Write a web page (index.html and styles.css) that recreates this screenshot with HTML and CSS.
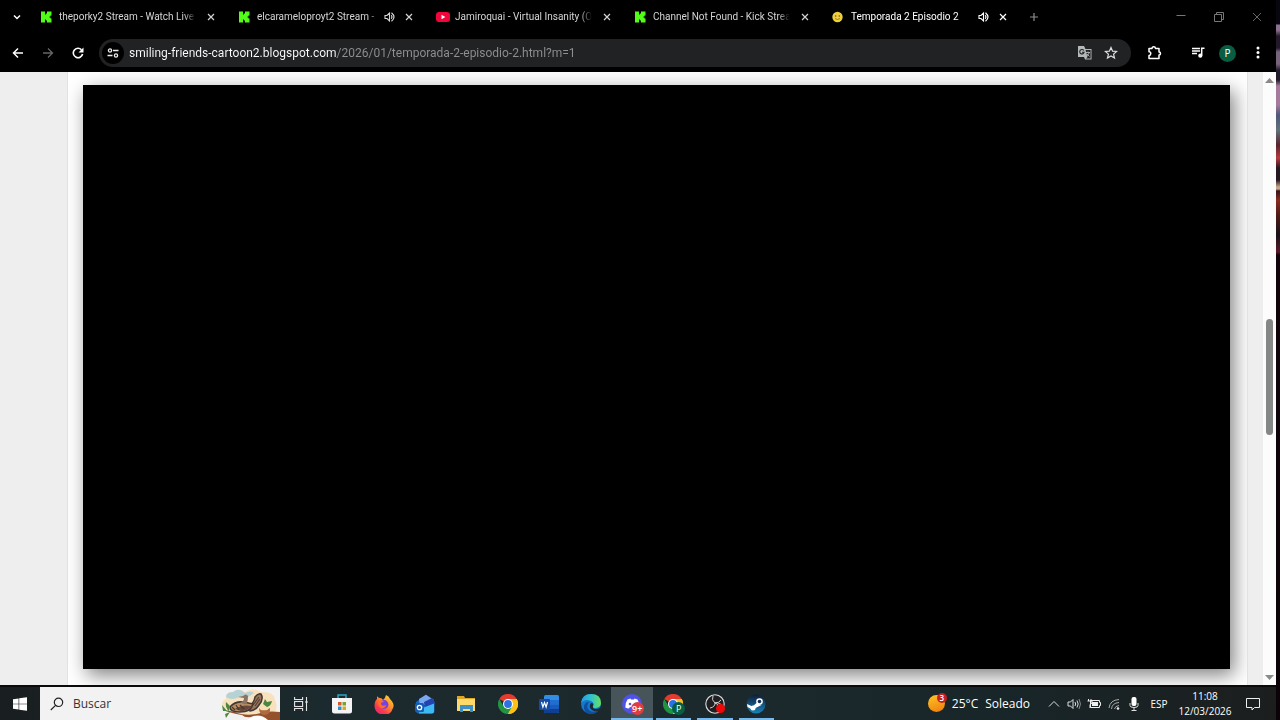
FILE: index.html
```html
<!DOCTYPE html>
<html lang="es">
<head>
<meta charset="utf-8">
<title>Temporada 2 Episodio 2</title>
<link rel="stylesheet" href="styles.css">
</head>
<body>
<svg class="defs" aria-hidden="true">
  <symbol id="kick" viewBox="0 0 12 12"><path fill="#53fc18" d="M1 0.500h4v3h1v-1h1v-2h4.500v4h-1v1h-1v1h1v1h1v4H7v-2H6v-1H5v3H1z"/></symbol>
  <symbol id="close" viewBox="0 0 10 10"><path d="M2 2l6 6M8 2L2 8" fill="none" stroke="currentColor" stroke-width="1.200"/></symbol>
  <symbol id="sound" viewBox="0 0 12 12"><path d="M1 4.500h2L5.500 2v8L3 7.500H1z" fill="none" stroke="currentColor" stroke-width="1.100"/><path d="M7.300 4.200q1.400 1.800 0 3.600M7.500 1.700q5 4.300 0 8.600" fill="none" stroke="currentColor" stroke-width="1.200"/></symbol>
  <symbol id="chrome" viewBox="0 0 20 20"><path fill="#e33b2e" d="M10 10L1.300 5A10 10 0 0 1 18.700 5z"/><path fill="#fbc116" d="M10 10V5h8.700A10 10 0 0 1 10 20z"/><path fill="#229342" d="M10 20A10 10 0 0 1 1.300 5L5.700 12.500 14.300 12.500z"/><path fill="#fbc116" d="M14.300 12.500L10 20a10 10 0 0 0 8.700-15H10z"/><circle cx="10" cy="10" r="5" fill="#fff"/><circle cx="10" cy="10" r="3.900" fill="#2a72e5"/></symbol>
</svg>
<div class="screen">
  <main class="browser">
    <header>
      <nav class="tabstrip" aria-label="Pestañas">
        <button class="tab-search" aria-label="Buscar pestañas"><svg width="10" height="10" viewBox="0 0 10 10"><path d="M2 3.500l3 3 3-3" fill="none" stroke="#fff" stroke-width="1.500"/></svg></button>
        <div class="tab"><svg class="favicon"><use href="#kick"/></svg><span class="title">theporky2 Stream - Watch Live</span><button class="close" aria-label="Cerrar"><svg><use href="#close"/></svg></button></div>
        <div class="tab"><svg class="favicon"><use href="#kick"/></svg><span class="title">elcarameloproyt2 Stream - </span><svg class="sound"><use href="#sound"/></svg><button class="close" aria-label="Cerrar"><svg><use href="#close"/></svg></button></div>
        <div class="tab"><svg class="favicon wide" viewBox="0 0 14 12"><rect y="1" width="14" height="10" rx="3" fill="#f0063a"/><path d="M5.500 3.800v4.400L9.300 6z" fill="#fff"/></svg><span class="title">Jamiroquai - Virtual Insanity (O</span><button class="close" aria-label="Cerrar"><svg><use href="#close"/></svg></button></div>
        <div class="tab"><svg class="favicon"><use href="#kick"/></svg><span class="title">Channel Not Found - Kick Strea</span><button class="close" aria-label="Cerrar"><svg><use href="#close"/></svg></button></div>
        <div class="tab active"><svg class="favicon" viewBox="0 0 12 12"><circle cx="5.500" cy="6" r="5.200" fill="#efcf3c"/><circle cx="3.700" cy="5" r=".8" fill="#6b5312"/><circle cx="7.300" cy="5" r=".8" fill="#6b5312"/><path d="M3 7.500q2.500 2 5 0" fill="none" stroke="#8a6b18" stroke-width=".8"/></svg><span class="title">Temporada 2 Episodio 2</span><svg class="sound"><use href="#sound"/></svg><button class="close" aria-label="Cerrar"><svg><use href="#close"/></svg></button></div>
        <button class="new-tab" aria-label="Nueva pestaña"><svg width="10" height="10" viewBox="0 0 10 10"><path d="M5 1v8M1 5h8" stroke="#8c8c8c" stroke-width="1.200"/></svg></button>
        <div class="window-controls">
          <button aria-label="Minimizar"><svg width="10" height="10" viewBox="0 0 10 10"><path d="M.5 3.500h9" stroke="#777"/></svg></button>
          <button aria-label="Restaurar"><svg width="10" height="10" viewBox="0 0 10 10"><path d="M.5 2.500h7v7h-7zM2.500 2.500v-2h7v7h-2" fill="none" stroke="#777"/></svg></button>
          <button aria-label="Cerrar ventana"><svg width="10" height="10" viewBox="0 0 10 10"><path d="M1 1l8 8M9 1L1 9" stroke="#666"/></svg></button>
        </div>
      </nav>
      <div class="toolbar">
        <button aria-label="Atrás"><svg width="12" height="12" viewBox="0 0 12 12"><path d="M11 6H2M6 1.500L1.500 6 6 10.500" fill="none" stroke="#fff" stroke-width="1.500"/></svg></button>
        <button aria-label="Adelante"><svg width="12" height="12" viewBox="0 0 12 12"><path d="M1 6h9M6 1.500L10.500 6 6 10.500" fill="none" stroke="#666" stroke-width="1.300"/></svg></button>
        <button aria-label="Recargar"><svg width="12" height="12" viewBox="0 0 12 12"><path d="M10.600 7A4.700 4.700 0 1 1 9.500 2.800" fill="none" stroke="#fff" stroke-width="1.600"/><path d="M11.500.5v5H6.500z" fill="#fff"/></svg></button>
        <form class="omnibox">
          <button type="button" class="site-info" aria-label="Información del sitio"><svg width="12" height="12" viewBox="0 0 12 12"><g fill="none" stroke="#eee" stroke-width="1.300"><circle cx="3" cy="3.500" r="1.600"/><path d="M6 3.500h5.500M.5 8.500h5"/><circle cx="9" cy="8.500" r="1.600"/></g></svg></button>
          <input class="url" type="text" aria-label="Dirección" value="smiling-friends-cartoon2.blogspot.com/2026/01/temporada-2-episodio-2.html?m=1">
          <button type="button" aria-label="Traducir"><svg width="14" height="14" viewBox="0 0 14 14"><path d="M0 0h6l1.500 3H13.500v10.500H7L6 11H0z" fill="#b5b8b9"/><path d="M7.600 4h5v8.500H8L9.500 11z" fill="#222527"/><path d="M5.800 4.500a2.200 2.200 0 1 0 .3 1.700H4" fill="none" stroke="#222527" stroke-width="1.100"/><path d="M8 6.500h4M10 5.500v1M11.300 6.500Q10.500 9 8.500 10M9 8l2.500 2.500" fill="none" stroke="#b5b8b9" stroke-width=".9"/></svg></button>
          <button type="button" aria-label="Añadir a marcadores"><svg width="14" height="14" viewBox="0 0 14 14"><path d="M7 1.500l1.600 3.700 4 .3-3 2.600.9 3.900L7 9.900 3.500 12l.9-3.900-3-2.600 4-.3z" fill="none" stroke="#dedede" stroke-width="1.200"/></svg></button>
        </form>
        <div class="actions">
          <button aria-label="Extensiones"><svg width="16" height="16" viewBox="0 0 16 16"><path d="M3 3.500h3Q6 1.800 7.700 1.800T9.500 3.500H13V7q1.500 0 1.500 1.500T13 10V13.500H3v-3q1.800-.2 1.800-2T3 6.800z" fill="none" stroke="#fff" stroke-width="1.500" stroke-linejoin="round"/></svg></button>
          <button class="media" aria-label="Control multimedia"><svg width="14" height="14" viewBox="0 0 14 14"><path d="M1 2.500h8M1 5h8M1 7.500h5" stroke="#fff" stroke-width="1.400"/><path d="M10.700 9.500V2.300H13.500" fill="none" stroke="#fff" stroke-width="1.500"/><circle cx="9.300" cy="9.700" r="2.100" fill="#fff"/></svg></button>
          <button class="avatar" aria-label="Perfil">P</button>
          <button class="more" aria-label="Menú"><svg width="4" height="14" viewBox="0 0 4 14"><g fill="#fff"><circle cx="2" cy="2" r="1.500"/><circle cx="2" cy="6.500" r="1.500"/><circle cx="2" cy="11" r="1.500"/></g></svg></button>
        </div>
      </div>
    </header>
    <section class="viewport">
      <div class="page"><article class="post"><div class="player" role="region" aria-label="Reproductor de vídeo"></div></article></div>
      <div class="scrollbar">
        <svg width="9" height="5" viewBox="0 0 9 5"><path d="M0 5h9L4.500 0z" fill="#8a8a8a"/></svg>
        <div class="track"><div class="thumb"></div></div>
        <svg width="9" height="5" viewBox="0 0 9 5"><path d="M0 0h9L4.500 5z" fill="#8a8a8a"/></svg>
      </div>
    </section>
  </main>
  <footer class="taskbar">
    <button class="start" aria-label="Inicio"><svg width="14" height="14" viewBox="0 0 14 14"><path fill="#fff" d="M0 2.200L5.600 1.400V6.700H0zM6.200 1.300L14 .2V6.700H6.200zM0 7.300H5.600V12.600L0 11.800zM6.200 7.300H14v6.500L6.200 12.700z"/></svg></button>
    <label class="search">
      <svg width="14" height="14" viewBox="0 0 14 14"><circle cx="8.500" cy="5.300" r="4.200" fill="none" stroke="#222" stroke-width="1.200"/><path d="M5.500 8.300L.8 13" stroke="#222" stroke-width="1.200"/></svg>
      <input type="text" placeholder="Buscar" aria-label="Buscar">
      <svg class="doodle" width="60" height="32" viewBox="0 0 60 32"><path d="M4 20Q-1 14 6 11 5 5 13 5 19 0 25 4q8-5 16 0 13-1 14 8 4 8-2 15L22 27z" fill="#f8e2bd"/><path d="M6 9Q6 4 13 4q6-5 12 1 6-3 9 0-8 7-15 4-7 4-13 0z" fill="#b7d2d5"/><path d="M3 22q10 1 14 3 12 4 27-1 8-1 16 0v8H48q-8-7-17-3-6 1-9-2Q10 25 3 22z" fill="#94512d"/><path d="M27 32q10-8 20 0z" fill="#fff"/><path d="M29 18q5-3 6-9 3-4 6-3 3 5-2 11-3 5-9 6z" fill="#9b765a" stroke="#423734" stroke-width="1.500"/><path d="M33 17l6-8M35 18l5-7" stroke="#554139" stroke-width="1.200"/><path d="M10 19q5-6 14-5l9 2q-2 8-13 8-10 0-10-5z" fill="#b88b62" stroke="#423734" stroke-width="1.600"/><path d="M15 21q7-5 17-3-5 5-11 5" fill="#65483b"/><path d="M12 19l3 3M16 17l3 5M20 17l4 4" stroke="#423734" stroke-width="1.200"/><path d="M20 14q4 0 4-4l-6-1 5-1q3-3 5 0 0 4-1 7-2 3-7-1z" fill="#8b7466"/><path d="M39 20q5 4 11 0 1 7-6 7-5-1-5-7z" fill="#ae6a3d"/><ellipse cx="44" cy="20" rx="4.500" ry="2.300" fill="#f7deb9"/><g fill="#4b873e"><path d="M6 14l4 4-1 5q-4-3-3-9zM2 17l5 6H3zM10 24l-4 6-1-4zM43 16l2-5 2 3 5-1q-1 5-5 6z"/></g></svg>
    </label>
    <div class="apps">
      <button aria-label="Vista de tareas"><svg width="14" height="14" viewBox="0 0 14 14"><g fill="none" stroke="#e5e5e5" stroke-width="1.100"><path d="M.6 0v2.500h8V0M.6 14v-2.500h8V14"/><rect x=".6" y="4.500" width="8" height="5"/><path d="M12.500 0v14M11 5h3"/></g></svg></button>
      <button aria-label="Microsoft Store"><svg width="20" height="20" viewBox="0 0 20 20"><path d="M6 4V1h8v3" fill="none" stroke="#2aa7c4" stroke-width="1.500"/><path d="M0 4h20v13q0 2.500-2.500 2.500h-15Q0 19.500 0 17z" fill="#f4f4f4"/><path fill="#d5562f" d="M6 8h3.500v3.500H6z"/><path fill="#75a52b" d="M10.500 8H14v3.500h-3.500z"/><path fill="#2e8fca" d="M6 12.500h3.500V16H6z"/><path fill="#dda922" d="M10.500 12.500H14V16h-3.500z"/></svg></button>
      <button aria-label="Firefox"><svg width="20" height="20" viewBox="0 0 20 20"><defs><linearGradient id="ff" x1="1" y1="0" x2="0.200" y2="1"><stop stop-color="#ffe243"/><stop offset=".4" stop-color="#ff9a27"/><stop offset=".75" stop-color="#fa3b4b"/><stop offset="1" stop-color="#df2876"/></linearGradient></defs><path d="M3 2q1 2 3 2 2 0 3 2 2-1 3-5 3 1 4 4 5 5 3 9-2 7-9 7Q1 20 .5 12 .5 7 3 5z" fill="url(#ff)"/><circle cx="10" cy="10.500" r="4.400" fill="#7543df"/><path d="M4 7q5-2 6 1-3 0-3 2 1 3 5 1-1 4-5 3-4-2-3-7z" fill="#ff6b2e"/></svg></button>
      <button aria-label="Outlook"><svg width="20" height="20" viewBox="0 0 20 20"><path d="M1 8L11 .8 19.500 8v9q0 2.500-2.500 2.500H4q-3 0-3-3z" fill="#1668c7"/><path d="M4 5l7-4.200L19 6 5 13z" fill="#79a8f1"/><path d="M9 8l8-4 2.500 4v3L10 15z" fill="#2443ae"/><path d="M5 15l14-5.500V17q0 2.500-2.500 2.500H4z" fill="#3cbaf1"/><rect y="9" width="9" height="9" rx="1.500" fill="#155cb5"/><circle cx="4.500" cy="13.500" r="2.200" fill="none" stroke="#fff" stroke-width="1.300"/></svg></button>
      <button aria-label="Explorador de archivos"><svg width="20" height="18" viewBox="0 0 20 18"><path d="M1 1h7l1 2h10v4H1z" fill="#e0a623"/><path d="M1 4h18v12H1z" fill="#ffd96a"/><path d="M4 10h13v7h-3v-3H7v3H4z" fill="#3c91c2"/></svg></button>
      <button aria-label="Google Chrome"><svg width="20" height="20"><use href="#chrome"/></svg></button>
      <button aria-label="Word"><svg width="20" height="20" viewBox="0 0 20 20"><rect x="5" y="1" width="15" height="18" rx="1.500" fill="#318de6"/><path d="M5 6h15v4.500H5z" fill="#216ecf"/><path d="M5 10.500h15V15H5z" fill="#185abd"/><path d="M5 15h15v3q0 1-1.500 1H6q-1 0-1-1z" fill="#103f91"/><rect y="5" width="11" height="11" rx="1" fill="#164ba3"/><path d="M2.500 8l1.400 5L5.500 8.500 7.100 13 8.500 8" fill="none" stroke="#fff" stroke-width="1.200"/></svg></button>
      <button aria-label="Microsoft Edge"><svg width="20" height="20" viewBox="0 0 20 20"><defs><linearGradient id="eg"><stop stop-color="#279be0"/><stop offset=".5" stop-color="#31c3cf"/><stop offset="1" stop-color="#67e25a"/></linearGradient></defs><circle cx="10" cy="10" r="10" fill="#1479ce"/><path d="M0 9Q1 0 10 0q10 0 10 9 0 4-5 5-4 0-3-2 2-3-2-5Q4 4 0 9z" fill="url(#eg)"/><path d="M8 8q-4 5 1 9 4 2 9-1-3 4-8 4-8-1-7-8 1-4 5-4z" fill="#124d9e"/><path d="M12 12q-1 3 3 3 3 0 5-2v3l-2 1q-4 1-7-1-4-3-1-7 3 0 2 3z" fill="#1c2b30"/></svg></button>
      <button class="running current" aria-label="Discord"><svg width="20" height="20" viewBox="0 0 20 20"><circle cx="10" cy="10" r="10" fill="#4e53e5"/><path d="M5.500 5.500l3-1 .5 1h3l.5-1 3 1q2 3 2 8-2 1-3.500 1l-1-1.500q-2 .5-5 0L7 14.500q-2 0-3.700-1 0-5 2.200-8z" fill="#fff"/><circle cx="8" cy="10" r="1.300" fill="#4e53e5"/></svg><span class="count">9+</span></button>
      <button class="running" aria-label="Google Chrome, perfil P"><svg width="20" height="20"><use href="#chrome"/></svg><span class="profile">P</span></button>
      <button class="running" aria-label="OBS Studio"><svg width="20" height="20" viewBox="0 0 20 20"><circle cx="10" cy="10" r="9.200" fill="#201f22" stroke="#ddd" stroke-width="1.100"/><path d="M8 2q-2 4 2 7 4 0 6-3M10 9q0 4-5 5M10 9q4 1 3 6M17 12q-2-4-7-3" fill="none" stroke="#cfcfcf"/><circle cx="15.500" cy="14.500" r="4.500" fill="#f00808"/></svg></button>
      <button class="running" aria-label="Steam"><svg width="20" height="20" viewBox="0 0 20 20"><defs><linearGradient id="st" x2="0" y2="1"><stop stop-color="#101b3a"/><stop offset="1" stop-color="#1784ba"/></linearGradient></defs><circle cx="10" cy="10" r="9.500" fill="url(#st)"/><path d="M1 10l5.500 2.500L10.500 9l5 2-5 2.500L7 16 1.500 13z" fill="#fff"/><circle cx="13.500" cy="7.500" r="3.300" fill="#fff"/><circle cx="13.500" cy="7.500" r="1.800" fill="#172b51"/><circle cx="7" cy="14" r="2.500" fill="#fff"/></svg></button>
    </div>
    <div class="tray">
      <button class="weather"><span class="sun"><span class="alert">3</span></span><span>25°C</span><span>Soleado</span></button>
      <div class="status">
        <button aria-label="Iconos ocultos"><svg width="12" height="14" viewBox="0 0 12 14"><path d="M1 9.500l5-5 5 5" fill="none" stroke="#ddd"/></svg></button>
        <button aria-label="Volumen"><svg width="14" height="14" viewBox="0 0 14 14"><path d="M1 5h2.500L6 2.500v9L3.500 9H1zM8 5q1.300 2 0 4M10 3.500q2.300 3.500 0 7" fill="none" stroke="#ddd"/><path d="M12 2q3 5 0 10" fill="none" stroke="#888"/></svg></button>
        <button aria-label="Batería"><svg width="14" height="14" viewBox="0 0 14 14"><path d="M3.500 3.500h9v2h1v3h-1v2h-9z" fill="none" stroke="#eee"/><path d="M5 5h6v4H5z" fill="#eee"/><path d="M1.500 2v2M4 2v2M.5 4h4.500v2L3 7.500V11" fill="none" stroke="#eee"/></svg></button>
        <button aria-label="Red"><svg width="12" height="14" viewBox="0 0 12 14"><g fill="none" stroke="#aaa"><path d="M1 11Q2 3 11 2.500M3.500 12Q4 6 11 5.500M6.500 12Q7 9 11 8.500"/></g><circle cx="10" cy="11.500" r="1.300" fill="#eee"/></svg></button>
        <button aria-label="Micrófono"><svg width="10" height="14" viewBox="0 0 10 14"><rect x="2.500" width="5" height="9" rx="2" fill="#fff"/><path d="M1 6v2.500q0 2 4 2t4-2V6M5 10.500V13M2.500 13.500h5" fill="none" stroke="#ddd"/></svg></button>
      </div>
      <button class="language">ESP</button>
      <time class="clock" datetime="2026-03-12T11:08"><span>11:08</span><span>12/03/2026</span></time>
      <button class="notices" aria-label="Notificaciones"><svg width="14" height="14" viewBox="0 0 14 14"><path d="M.5 1.500h13v9H8.500l-2.500 2.500v-2.500H.5z" fill="none" stroke="#eee"/></svg></button>
    </div>
  </footer>
</div>
<aside class="wallpaper" aria-hidden="true"></aside>
</body>
</html>
```
FILE: styles.css
```css
* { box-sizing: border-box; }
body {
  margin: 0;
  min-height: 100vh;
  display: flex;
  background: #000;
  font-family: "Open Sans", "Noto Sans", sans-serif;
  font-size: 11px;
  color: #fff;
}
button {
  display: flex;
  align-items: center;
  justify-content: center;
  padding: 0;
  border: 0;
  background: none;
  color: inherit;
  font: inherit;
}
svg { display: block; flex: none; }
.defs { position: absolute; width: 0; height: 0; }
.screen { flex: 1; min-width: 0; display: flex; flex-direction: column; }
.browser { flex: 1; display: flex; flex-direction: column; }

.tabstrip { display: flex; align-items: center; height: 34px; }
.tab-search { width: 33px; }
.tab {
  flex: 0 1 198px;
  min-width: 0;
  display: flex;
  align-items: center;
  padding: 0 13px 0 7px;
  color: #d4d4d4;
}
.tab.active { color: #fff; }
.favicon { width: 12px; height: 12px; margin-right: 7px; }
.favicon.wide { width: 14px; height: 12px; margin: 0 5px 0 0; }
.title {
  flex: 1;
  overflow: hidden;
  white-space: nowrap;
  font-family: Roboto, "Open Sans", sans-serif;
  font-size: 10px;
  line-height: 16px;
  mask-image: linear-gradient(to right, #000 calc(100% - 12px), transparent);
}
.sound { width: 12px; height: 12px; margin: 0 6px 0 4px; }
.close { width: 14px; height: 14px; }
.title + .close { margin-left: 8px; }
.close svg { width: 10px; height: 10px; }
.new-tab { width: 22px; height: 24px; }
.window-controls { display: flex; margin-left: auto; }
.window-controls button { width: 38px; height: 32px; }

.toolbar { display: flex; align-items: center; height: 38px; padding-right: 6px; }
.toolbar > button { width: 30px; height: 30px; }
.toolbar > button:first-child { width: 33px; padding-left: 3px; }
.omnibox {
  flex: 1;
  display: flex;
  align-items: center;
  gap: 8px;
  height: 28px;
  margin-left: 6px;
  padding: 0 11px 0 3px;
  border-radius: 14px;
  background: #202224;
}
.omnibox button { width: 18px; height: 22px; }
.omnibox .site-info { width: 22px; margin-right: -3px; border-radius: 50%; background: #000; }
.url {
  flex: 1;
  min-width: 0;
  padding: 0;
  border: 0;
  outline: 0;
  font: 12px/20px Roboto, "Open Sans", sans-serif;
  color: transparent;
  background: linear-gradient(to right, #fff 208px, #8e9092 208px) text;
}
.actions { display: flex; align-items: center; margin-left: 11px; }
.actions button { width: 24px; height: 24px; }
.actions .media { margin: 0 9px 0 20px; }
.actions .avatar { width: 17px; height: 17px; border-radius: 50%; background: #075e43; font-size: 10px; }
.actions .more { margin-left: 10px; }

.viewport { flex: 1; display: flex; background: #eee; }
.page { flex: 1; display: flex; padding: 0 15px 0 67px; }
.post {
  flex: 1;
  display: flex;
  padding: 13px 17px 16px 15px;
  border: solid #e2e2e2;
  border-width: 0 1px;
  background: #fff;
  overflow: hidden;
}
.player { flex: 1; background: #000; box-shadow: 4px 6px 18px rgba(0, 0, 0, .5); }
.scrollbar {
  display: flex;
  flex-direction: column;
  align-items: center;
  width: 13px;
  padding: 6px 0 5px;
  background: #fcfcfc;
}
.track { flex: 1; width: 7px; padding-top: 236px; }
.thumb { height: 116px; border-radius: 4px; background: #858786; }

.taskbar {
  display: flex;
  align-items: stretch;
  height: 35px;
  border-top: 2px solid #080a0b;
  background: linear-gradient(to right, #191e20, #1b2a2e 25%, #1b292c 60%, #182629 78%, #1c1e1e);
}
.start { width: 40px; }
.search { flex: 0 1 240px; min-width: 0; display: flex; align-items: center; padding-left: 10px; background: #f2f2f2; }
.search input { flex: 1; width: 0; min-width: 0; padding: 0 0 0 9px; border: 0; outline: 0; background: none; font: 12px/20px "Open Sans", "Noto Sans", sans-serif; }
.search input::placeholder { color: #333; opacity: 1; }
.apps { flex: 0 1 497px; display: grid; grid-template-columns: repeat(12, 1fr); }
.apps button { position: relative; }
.running::after { content: ""; position: absolute; left: 3px; right: 3px; bottom: 0; height: 2px; background: #76b9ed; }
.current { background: #47555a; }
.current::after { left: 0; right: 0; }
.count, .profile {
  position: absolute;
  right: 9px;
  bottom: 5px;
  width: 13px;
  height: 13px;
  border-radius: 50%;
  background: #e33b43;
  font-size: 9px;
  font-weight: 600;
  line-height: 13px;
  text-align: center;
}
.profile { background: #075e43; font-weight: 400; }
.tray { display: flex; align-items: center; margin-left: auto; }
.weather { gap: 7px; margin-right: 14px; font-size: 12px; }
.weather span { white-space: nowrap; }
.sun { position: relative; width: 17px; height: 17px; border-radius: 50%; background: linear-gradient(160deg, #ffc527, #ee7b0c); }
.alert { position: absolute; top: -2px; right: -2px; width: 10px; height: 10px; border-radius: 50%; background: #c4201f; font-size: 8px; font-weight: 600; line-height: 10px; text-align: center; }
.status { display: flex; }
.status button { width: 20px; height: 30px; }
.language { width: 30px; font-size: 10px; }
.clock { display: flex; flex-direction: column; width: 62px; font-size: 10px; line-height: 15px; text-align: center; }
.notices { width: 34px; height: 30px; margin-right: 6px; }

.wallpaper {
  width: 4px;
  background: linear-gradient(#080710 0 24px, #8d7290 25px 30px, #211928 36px 48px, #78637c 52px 64px, #221c2b 70px 80px, #a67a9d 86px 105px, #4e5878 115px, #61737c 130px, #57242d 145px, #b53b3e 158px, #251720 168px 180px, #c6a58a 187px 189px, #35131a 191px, #8a2b22 200px, #4d1b17 215px, #171219 235px, #5c1828 252px, #11040a 255px, #0b0307);
}
```
